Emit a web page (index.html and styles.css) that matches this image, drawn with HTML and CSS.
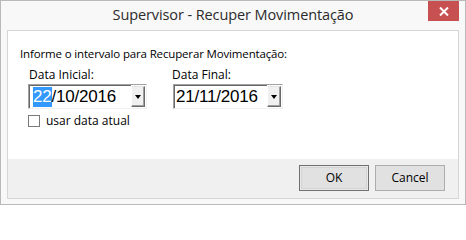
FILE: index.html
```html
<!DOCTYPE html>
<html lang="pt">
<head>
<meta charset="utf-8">
<title>Supervisor - Recuper Movimentação</title>
<link rel="stylesheet" href="styles.css">
</head>
<body>
<div class="window">
  <div class="titlebar">
    <span class="title">Supervisor - Recuper Movimentação</span>
    <div class="close">
      <svg width="10" height="9" viewBox="0 0 10 9"><path d="M1 0.5 L9 8.5 M9 0.5 L1 8.5" stroke="#fff" stroke-width="2"/></svg>
    </div>
  </div>
  <div class="client">
    <div class="content">
      <div class="prompt">Informe o intervalo para Recuperar Movimentação:</div>
      <div class="fields">
        <div class="field">
          <div class="label">Data Inicial:</div>
          <div class="combo c1">
            <div class="value"><span class="sel">22</span>/10/2016</div>
            <div class="drop"><span class="arrow"></span></div>
          </div>
        </div>
        <div class="field f2">
          <div class="label">Data Final:</div>
          <div class="combo c2">
            <div class="value">21/11/2016</div>
            <div class="drop"><span class="arrow"></span></div>
          </div>
        </div>
      </div>
      <label class="check"><span class="box"></span><span>usar data atual</span></label>
    </div>
    <div class="footer">
      <button class="btn default">OK</button>
      <button class="btn">Cancel</button>
    </div>
  </div>
</div>
</body>
</html>
```
FILE: styles.css
```css
* { box-sizing: border-box; }
html, body { margin: 0; padding: 0; background: #fff; }
body { font-family: "Open Sans", "Noto Sans", sans-serif; }

.window {
  width: 466px;
  height: 205px;
  border: 1px solid #b9b9b9;
  background: #f8f8f8;
  display: flex;
  flex-direction: column;
  position: relative;
}

.titlebar {
  height: 29px;
  display: flex;
  justify-content: center;
  align-items: flex-start;
}
.title {
  font-size: 14.5px;
  color: #2b2b2b;
  line-height: 20px;
  padding-top: 4px;
  letter-spacing: -0.1px;
}
.close {
  position: absolute;
  top: 0;
  right: 6px;
  width: 31px;
  height: 20px;
  background: #c75050;
  display: flex;
  align-items: center;
  justify-content: center;
}

.client {
  margin: 0 6px;
  height: 169px;
  border: 1px solid #d6d6d6;
  display: flex;
  flex-direction: column;
}

.content {
  background: #fff;
  height: 128px;
  padding: 15px 0 0 12px;
  font-size: 11.5px;
  color: #000;
}
.prompt { line-height: 16px; letter-spacing: -0.15px; }

.fields {
  display: flex;
  padding-left: 8px;
  margin-top: 3px;
}
.field { display: flex; flex-direction: column; }
.field.f2 { margin-left: 26px; }
.label { font-size: 12px; line-height: 19px; letter-spacing: 0; padding-left: 1px; }
.f2 .label { padding-left: 0; margin-left: -1px; }

.combo {
  height: 25px;
  display: flex;
  align-items: stretch;
  border-top: 1px solid #a0a0a0;
  border-left: 1px solid #a0a0a0;
  border-right: 1px solid #f0f0f0;
  border-bottom: 1px solid #f0f0f0;
}
.combo.c1 { width: 119px; }
.combo.c2 { width: 110px; }
.value {
  flex: 1;
  border-top: 1px solid #696969;
  border-left: 1px solid #696969;
  background: #fff;
  font-family: "Liberation Sans", Arial, sans-serif;
  font-size: 17px;
  line-height: 22px;
  padding-left: 3px;
  letter-spacing: -0.2px;
  white-space: nowrap;
}
.combo.c2 .value { padding-left: 1px; }
.sel { background: #3399ff; color: #fff; display: inline-block; line-height: 20px; }
.drop {
  width: 14px;
  margin: 1px 1px 1px 0;
  background: #f0f0f0;
  border-top: 1px solid #e3e3e3;
  border-left: 1px solid #fff;
  border-right: 1px solid #696969;
  border-bottom: 1px solid #696969;
  display: flex;
  align-items: center;
  justify-content: center;
  box-shadow: inset -1px -1px 0 #a0a0a0;
}
.arrow {
  width: 0; height: 0;
  border-left: 3.5px solid transparent;
  border-right: 3.5px solid transparent;
  border-top: 4px solid #000;
  margin-top: 1px;
}

.check {
  display: flex;
  align-items: center;
  margin: 5px 0 0 8px;
  line-height: 14px;
  font-size: 12px;
}
.box {
  width: 12px;
  height: 12px;
  border: 1px solid #7a7a7a;
  background: #fff;
  margin-right: 6px;
}

.footer {
  flex: 1;
  background: #f0f0f0;
  display: flex;
  justify-content: flex-end;
  align-items: flex-start;
  padding: 6px 13px 0 0;
  gap: 6px;
}
.btn {
  width: 70px;
  height: 26px;
  font-family: "Open Sans", "Noto Sans", sans-serif;
  font-size: 12px;
  color: #000;
  background: #e1e1e1;
  border: 1px solid #adadad;
  padding: 0;
  margin: 0;
  line-height: 22px;
}
.btn.default {
  border: 1px solid #707070;
  box-shadow: inset 0 0 0 1px #e9e9e9, inset 0 0 0 2px #d4d4d4;
}
```
